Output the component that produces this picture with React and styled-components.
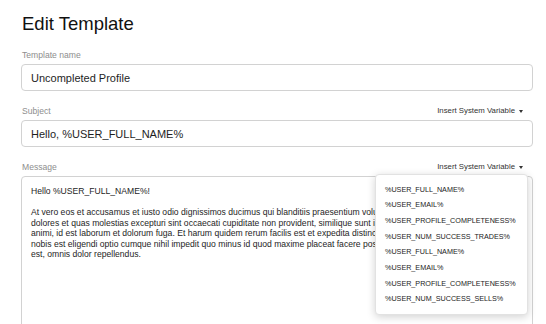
import React from 'react';
import styled, { createGlobalStyle } from 'styled-components';

const GlobalStyle = createGlobalStyle`
  html, body {
    margin: 0;
    padding: 0;
    background: #ffffff;
  }
  body {
    font-family: "Liberation Sans", Arial, Helvetica, sans-serif;
    color: #222;
  }
`

const Page = styled.div`
  padding: 13px 13px 0 21px;
  height: 324px;
  box-sizing: border-box;
  overflow: hidden;
`

const Title = styled.h1`
  margin: 0 0 14px 1px;
  font-size: 18.5px;
  line-height: 22px;
  font-weight: 400;
  color: #111;
`

const Field = styled.div`
  margin-bottom: 14px;
`

const LabelRow = styled.div`
  display: flex;
  align-items: center;
  justify-content: space-between;
  height: 12px;
  margin-bottom: 3px;
  padding: 0 10px 0 1px;
`

const Label = styled.label`
  font-size: 8.6px;
  line-height: 12px;
  color: #8e8e8e;
`

const VarMenu = styled.div`
  position: relative;
`

const VarButton = styled.button`
  display: flex;
  align-items: center;
  gap: 4px;
  border: 0;
  background: none;
  padding: 0;
  font-family: inherit;
  font-size: 7.8px;
  line-height: 12px;
  color: #333;
  cursor: pointer;
`

const Caret = styled.span`
  width: 0;
  height: 0;
  border-left: 2.5px solid transparent;
  border-right: 2.5px solid transparent;
  border-top: 3px solid #333;
`

const Dropdown = styled.ul`
  position: absolute;
  top: calc(100% + 1px);
  right: -5px;
  width: 153px;
  margin: 0;
  padding: 6.5px 0;
  list-style: none;
  background: #fff;
  border: 1px solid #e2e2e2;
  border-radius: 4px;
  box-shadow: 0 2px 9px rgba(0, 0, 0, 0.18);
  box-sizing: border-box;
  z-index: 10;
`

const DropItem = styled.li`
  padding: 0 9px;
  height: 15.7px;
  line-height: 15.7px;
  font-size: 7.2px;
  color: #222;
  white-space: nowrap;
`

const Input = styled.div`
  height: 27px;
  box-sizing: border-box;
  border: 1px solid #d2d2d2;
  border-radius: 4px;
  padding: 0 9px;
  display: flex;
  align-items: center;
  font-size: 11px;
  color: #1e1e1e;
`

const TextArea = styled.div`
  height: 170px;
  box-sizing: border-box;
  border: 1px solid #d2d2d2;
  border-radius: 4px;
  padding: 8px 9px;
  font-size: 8.6px;
  color: #1e1e1e;
  overflow: hidden;
`

const Line = styled.div`
  line-height: ${p => p.lh || 10.5}px;
  white-space: nowrap;
  margin-top: ${p => p.gap || 0}px;
`

const variables = [
  '%USER_FULL_NAME%',
  '%USER_EMAIL%',
  '%USER_PROFILE_COMPLETENESS%',
  '%USER_NUM_SUCCESS_TRADES%',
  '%USER_FULL_NAME%',
  '%USER_EMAIL%',
  '%USER_PROFILE_COMPLETENESS%',
  '%USER_NUM_SUCCESS_SELLS%',
]

const bodyLines = [
  'At vero eos et accusamus et iusto odio dignissimos ducimus qui blanditiis praesentium voluptatum deleniti atque corrupti quos',
  'dolores et quas molestias excepturi sint occaecati cupiditate non provident, similique sunt in culpa qui officia deserunt mollitia',
  'animi, id est laborum et dolorum fuga. Et harum quidem rerum facilis est et expedita distinctio. Nam libero tempore, cum soluta',
  'nobis est eligendi optio cumque nihil impedit quo minus id quod maxime placeat facere possimus, omnis voluptas assumenda',
  'est, omnis dolor repellendus.',
]

const InsertVariable = ({ open }) => (
  <VarMenu>
    <VarButton>
      Insert System Variable <Caret />
    </VarButton>
    {open && (
      <Dropdown>
        {variables.map((v, i) => <DropItem key={i}>{v}</DropItem>)}
      </Dropdown>
    )}
  </VarMenu>
)

const App = () => {
  return (
    <Page>
      <GlobalStyle />
      <Title>Edit Template</Title>

      <Field>
        <LabelRow>
          <Label>Template name</Label>
        </LabelRow>
        <Input>Uncompleted Profile</Input>
      </Field>

      <Field>
        <LabelRow>
          <Label>Subject</Label>
          <InsertVariable />
        </LabelRow>
        <Input>Hello, %USER_FULL_NAME%</Input>
      </Field>

      <Field>
        <LabelRow>
          <Label>Message</Label>
          <InsertVariable open />
        </LabelRow>
        <TextArea>
          <Line lh={12}>Hello %USER_FULL_NAME%!</Line>
          <Line gap={10}>{bodyLines[0]}</Line>
          {bodyLines.slice(1).map((l, i) => <Line key={i}>{l}</Line>)}
        </TextArea>
      </Field>
    </Page>
  );
}

export default App;
